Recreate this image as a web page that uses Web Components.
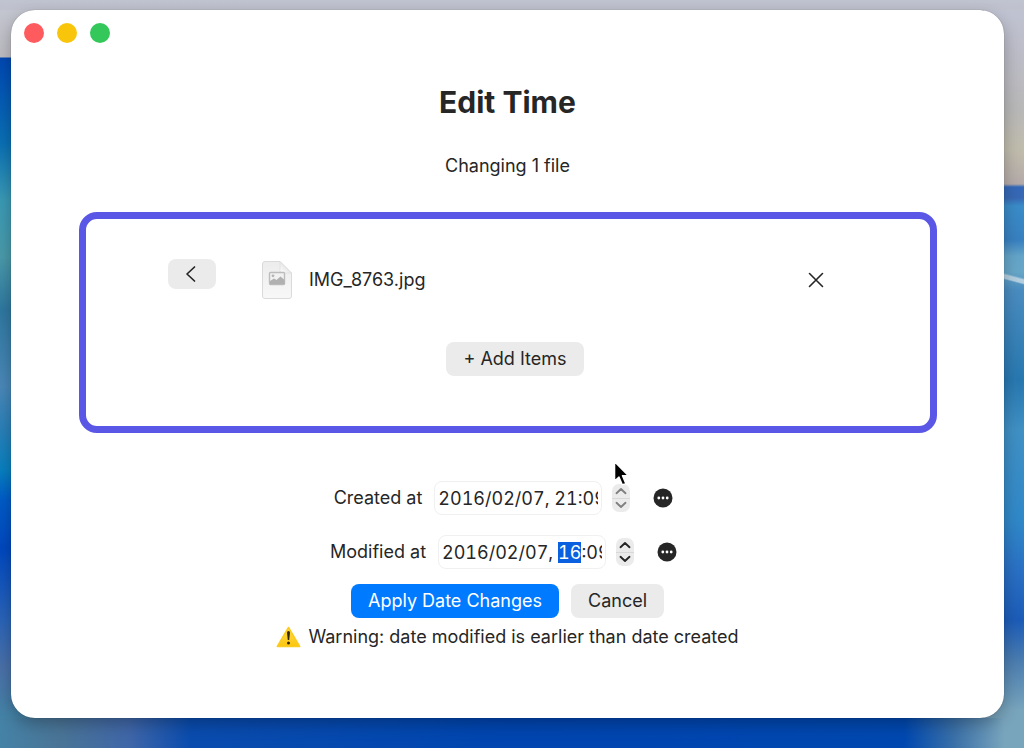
<!DOCTYPE html>
<html lang="en">
<head>
<meta charset="utf-8">
<meta name="viewport" content="width=device-width, initial-scale=1">
<title>Edit Time</title>
<style>
  body { margin: 0; font-family: Inter, "Liberation Sans", sans-serif; font-size: 18px; line-height: 24px; color: #262626; }
</style>
</head>
<body>
<desk-top>
  <app-window>
    <page-head heading="Edit Time">Changing 1 file</page-head>
    <file-panel>
      <file-row name="IMG_8763.jpg"></file-row>
    </file-panel>
    <date-form>
      <date-row label="Created at" value="2016/02/07, 21:09" dim></date-row>
      <date-row label="Modified at" value="2016/02/07, 16:09" select="12,14"></date-row>
      <push-button slot="actions" primary>Apply Date Changes</push-button>
      <push-button slot="actions">Cancel</push-button>
      <warning-note slot="note">Warning: date modified is earlier than date created</warning-note>
    </date-form>
  </app-window>
  <mouse-pointer></mouse-pointer>
</desk-top>

<script>
// shared base, every element only has to give its html
class BaseEl extends HTMLElement {
  constructor() {
    super();
    this.attachShadow({ mode: 'open' });
    const template = document.createElement('template');
    template.innerHTML = `<style>*{box-sizing:border-box}</style>${this.html}`;
    this.shadowRoot.appendChild(template.content.cloneNode(true));
  }
  $(id) { return this.shadowRoot.getElementById(id) }
}

class DeskTop extends BaseEl {
  get html() { return `
    <style>
    :host {
      display:grid;position:relative;min-height:100vh;box-sizing:border-box;
      padding:10px 20px 30px 11px;overflow:hidden;
      background:
        linear-gradient(90deg, #4482a6, #4a7496 60px, #3f66a8 130px, #0a4cae 190px, #0045b0 50%, #0048b0 calc(100% - 120px), #3a70a8 calc(100% - 70px), #78a4bc calc(100% - 20px)) left bottom / 100% 30px no-repeat,
        linear-gradient(#c0c4d0, #bfc1cd) left top / 100% 10px no-repeat,
        linear-gradient(#c4c7d2, #bdbcc2 57px, #0048b4 58px, #0a70b5 143px, #3a9ab5 200px, #4a9aaa 257px, #2f78a0 310px, #4a88b8 386px, #2a80b8 429px, #0880c0 470px, #005cc8 500px, #0048c0 548px, #2a64b8 620px, #4a70a8 667px, #4482a6 715px) left top / 40px 100% no-repeat,
        linear-gradient(15deg, #0000 44%, #b4cfe0 50%, #b4cfe0 62%, #0000 70%) right 270px / 40px 16px no-repeat,
        linear-gradient(#c0c4d4, #bcbcc6 60px, #b8b8b8 110px, #c0bcac 150px, #b4aaa8 184px, #3468b8 187px, #3868b4 198px, #3a8cc8 206px, #3880c0 240px, #64a4c8 256px, #68a6c8 272px, #4a8cc0 290px, #2878b0 380px, #4090c4 430px, #3088c8 520px, #2a70c4 570px, #1c5cb8 620px, #4a7cb0 660px, #78a4bc 710px) right top / 40px 100% no-repeat,
        #4482a6;
    }
    </style>
    <slot></slot>
    `}
}
customElements.define('desk-top', DeskTop)

class AppWindow extends BaseEl {
  get html() { return `
    <style>
    :host {
      display:flex;flex-direction:column;background:#fff;border-radius:24px;
      box-shadow:0 0 1px #0006, 0 6px 16px #0004;padding-bottom:40px;
    }
    .bar { display:flex;gap:13px;padding:13px; }
    .bar button { width:20px;height:20px;border:0;border-radius:50%;padding:0; }
    .close { background:#fe5b5f; }
    .min { background:#f9c50b; }
    .zoom { background:#34c759; }
    </style>
    <div class="bar">
      <button class="close" aria-label="Close"></button>
      <button class="min" aria-label="Minimize"></button>
      <button class="zoom" aria-label="Zoom"></button>
    </div>
    <slot></slot>
    `}
}
customElements.define('app-window', AppWindow)

class PageHead extends BaseEl {
  connectedCallback() { this.$('heading').textContent = this.getAttribute('heading') }
  get html() { return `
    <style>
    :host { display:block;text-align:center;padding-top:28px; }
    h1 { margin:0;font-size:30px;line-height:36px;font-weight:700; }
    p { margin:34px 0 0; }
    </style>
    <h1 id="heading"></h1>
    <p><slot></slot></p>
    `}
}
customElements.define('page-head', PageHead)

class PushButton extends BaseEl {
  get html() { return `
    <style>
    :host { display:inline-flex; }
    button {
      font:inherit;color:inherit;background:#ebebeb;border:0;border-radius:8px;
      height:34px;padding:0 17px;white-space:nowrap;
    }
    :host([primary]) button { background:#007aff;color:#fff; }
    </style>
    <button><slot></slot></button>
    `}
}
customElements.define('push-button', PushButton)

class FileRow extends BaseEl {
  connectedCallback() { this.$('name').textContent = this.getAttribute('name') }
  get html() { return `
    <style>
    :host { display:flex;align-items:center;flex:1;height:42px; }
    #name { flex:1;margin-left:17px; }
    button { width:16px;height:16px;padding:0;border:0;background:none;color:inherit;display:flex; }
    </style>
    <svg width="30" height="38" viewBox="0 0 30 38">
      <defs>
        <linearGradient id="paper" x1="0" y1="0" x2="0" y2="1"><stop offset="0" stop-color="#ececec"/><stop offset="1" stop-color="#f8f8f8"/></linearGradient>
        <linearGradient id="fold" x1="0" y1="1" x2="1" y2="0"><stop offset="0" stop-color="#fff"/><stop offset=".6" stop-color="#e4e4e4"/></linearGradient>
      </defs>
      <path d="M3 .5H18L29.500 12V35a2.500 2.500 0 0 1-2.500 2.500H3A2.500 2.500 0 0 1 .5 35V3A2.500 2.500 0 0 1 3 .5Z" fill="url(#paper)" stroke="#dadada"/>
      <path d="M18 .5V9.500a2.500 2.500 0 0 0 2.500 2.500H29.500Z" fill="url(#fold)" stroke="#dcdcdc" stroke-width=".7"/>
      <rect x="7.500" y="11.500" width="15" height="12" rx="1" fill="#f1f1f1" stroke="#bcbcbc" stroke-width="1.400"/>
      <circle cx="11" cy="14.800" r="1.400" fill="#b4b4b4"/>
      <path d="M8 20l4-2.500 2.500 1.500 4-3.500 4 3.500v4.200H8z" fill="#b0b0b0"/>
    </svg>
    <span id="name"></span>
    <button aria-label="Remove file">
      <svg width="16" height="16" viewBox="0 0 16 16" fill="none" stroke="currentColor" stroke-width="1.600" stroke-linecap="round"><path d="M1.500 1.500l13 13M14.500 1.500l-13 13"/></svg>
    </button>
    `}
}
customElements.define('file-row', FileRow)

class FilePanel extends BaseEl {
  get html() { return `
    <style>
    :host {
      display:block;box-sizing:border-box;margin:34px 67px 0 68px;padding:40px 68px 50px 82px;
      border:7px solid #5a57e6;border-radius:18px;
    }
    .top { display:flex;align-items:flex-start;padding-right:38px; }
    .back {
      display:flex;align-items:center;justify-content:center;width:48px;height:30px;
      margin-right:46px;padding:0;border:0;border-radius:8px;background:#ebebeb;color:inherit;
    }
    .add { display:flex;justify-content:center;margin-top:41px; }
    </style>
    <div class="top">
      <button class="back" aria-label="Back">
        <svg width="14" height="18" viewBox="0 0 14 18" fill="none" stroke="currentColor" stroke-width="1.700" stroke-linecap="round" stroke-linejoin="round"><path d="M9.500 2L2 9l7.500 7"/></svg>
      </button>
      <slot></slot>
    </div>
    <div class="add"><push-button>+ Add Items</push-button></div>
    `}
}
customElements.define('file-panel', FilePanel)

class DateRow extends BaseEl {
  connectedCallback() {
    this.$('label').textContent = this.getAttribute('label')
    var field = this.$('field')
    field.value = this.getAttribute('value')
    var sel = this.getAttribute('select')
    if (sel) {
      var [from, to] = sel.split(',')
      field.focus({ preventScroll: true })
      field.setSelectionRange(+from, +to)
    }
  }
  get html() { return `
    <style>
    :host { display:flex;align-items:center;height:34px; }
    input {
      font:inherit;font-variant-numeric:tabular-nums;color:inherit;
      width:168px;height:34px;margin:0 10px 0 12px;padding:0 3px;
      border:1px solid #f0f0f0;border-radius:8px;background:#fff;outline:0;
    }
    input::selection { background:#0a60df;color:#fff; }
    .step {
      display:flex;flex-direction:column;width:18px;height:28px;margin-right:23px;
      border-radius:7px;background:#ebebeb;overflow:hidden;
    }
    .step button {
      flex:1;display:flex;align-items:center;justify-content:center;
      padding:0;border:0;background:none;color:inherit;
    }
    .step button + button { border-top:1px solid #d8d8d8; }
    :host([dim]) .step { color:#808080; }
    .more { display:flex;padding:0;border:0;background:none;color:#262626; }
    </style>
    <label id="label" for="field"></label>
    <input id="field" type="text" spellcheck="false" autocomplete="off">
    <div class="step">
      <button aria-label="Increase"><svg width="12" height="8" viewBox="0 0 12 8" fill="none" stroke="currentColor" stroke-width="1.900" stroke-linecap="round" stroke-linejoin="round"><path d="M1.500 6.200L6 2l4.500 4.200"/></svg></button>
      <button aria-label="Decrease"><svg width="12" height="8" viewBox="0 0 12 8" fill="none" stroke="currentColor" stroke-width="1.900" stroke-linecap="round" stroke-linejoin="round"><path d="M1.500 1.800L6 6l4.500-4.200"/></svg></button>
    </div>
    <button class="more" aria-label="More options">
      <svg width="20" height="20" viewBox="0 0 20 20"><circle cx="10" cy="10" r="9.500" fill="currentColor"/><g fill="#fff"><circle cx="5.800" cy="10" r="1.400"/><circle cx="10" cy="10" r="1.400"/><circle cx="14.200" cy="10" r="1.400"/></g></svg>
    </button>
    `}
}
customElements.define('date-row', DateRow)

class WarningNote extends BaseEl {
  get html() { return `
    <style>
    :host { display:flex;align-items:center;gap:7px; }
    </style>
    <svg width="25" height="22" viewBox="0 0 25 22">
      <defs><linearGradient id="w" x1="0" y1="0" x2="0" y2="1"><stop offset="0" stop-color="#ffdc4a"/><stop offset="1" stop-color="#fcc60e"/></linearGradient></defs>
      <path d="M12.500 1.500L23.700 20.500H1.300Z" fill="url(#w)" stroke="#fccb20" stroke-width="1.500" stroke-linejoin="round"/>
      <path d="M11 6.500a1.500 1.500 0 0 1 3 0l-.8 7.500h-1.400z" fill="#332400"/>
      <circle cx="12.500" cy="17" r="1.500" fill="#332400"/>
    </svg>
    <slot></slot>
    `}
}
customElements.define('warning-note', WarningNote)

class DateForm extends BaseEl {
  get html() { return `
    <style>
    :host { display:flex;flex-direction:column;align-items:center;padding-top:48px; }
    .rows { display:flex;flex-direction:column;align-items:center;gap:20px;padding-right:8px; }
    .actions { display:flex;gap:12px;margin:15px 0 7px; }
    </style>
    <div class="rows"><slot></slot></div>
    <div class="actions"><slot name="actions"></slot></div>
    <slot name="note"></slot>
    `}
}
customElements.define('date-form', DateForm)

class MousePointer extends BaseEl {
  get html() { return `
    <style>
    /* floats over everything */
    :host { display:block;position:absolute;left:613px;top:460px;pointer-events:none; }
    svg { display:block; }
    </style>
    <svg width="17" height="27" viewBox="0 0 16 25"><path d="M1.500 1.500V19.500L5.600 15.800 8.800 23.200 12 21.800 8.900 14.600H14.500Z" fill="#000" stroke="#fff" stroke-width="1.300" stroke-linejoin="round"/></svg>
    `}
}
customElements.define('mouse-pointer', MousePointer)
</script>
</body>
</html>
